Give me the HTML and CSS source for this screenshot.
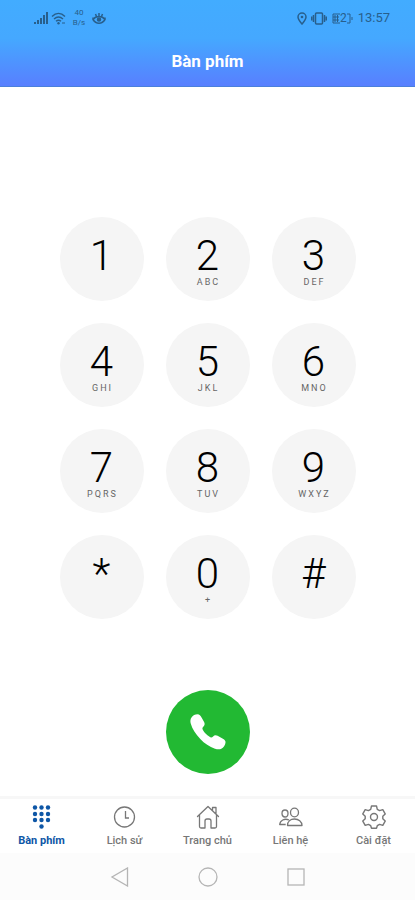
FILE: index.html
```html
<!DOCTYPE html>
<html lang="vi">
<head>
  <meta charset="UTF-8">
  <meta name="viewport" content="width=device-width, initial-scale=1.0">
  <title>Bàn phím</title>
  <link rel="stylesheet" href="styles.css">
</head>
<body>
  <header class="header">
    <div class="status-bar">
      <div class="status-group">
        <svg width="15" height="12" viewBox="0 0 15 12" fill="currentColor">
          <path d="M0 10h2v2H0zM3 8h2v4H3zM6 6h2v6H6zM9 3h2v9H9zM12 0h2v12h-2z"/>
        </svg>
        <svg width="15" height="13" viewBox="0 0 15 13" fill="none" stroke="currentColor" stroke-width="1.4">
          <path d="M1 4.500C5 .5 10 .5 14 4.500M3 7c3-2.600 6-2.600 9 0M5 9.300c1.500-1.300 3.500-1.300 5 0"/>
          <circle cx="7.500" cy="11.300" r="1.200" fill="currentColor" stroke="none"/>
          <path d="M11 11h3" stroke-width="1"/>
        </svg>
        <span class="speed"><span>40</span><span>B/s</span></span>
        <svg width="14" height="13" viewBox="0 0 14 13" fill="none" stroke="currentColor" stroke-width="1.500">
          <path d="M1 5.500v2c3 5 9 5 12 0v-2M1 7.500c3-4 9-4 12 0M7 1v3M3.500 2l1 2.500M10.500 2l-1 2.500"/>
          <circle cx="7" cy="7.500" r="1.500" fill="currentColor"/>
        </svg>
      </div>
      <div class="status-group status-right">
        <svg width="10" height="13" viewBox="0 0 10 13" fill="none" stroke="currentColor" stroke-width="1.500">
          <path d="M5 12C3 9.500 1 7.500 1 5a4 4 0 0 1 8 0c0 2.500-2 4.500-4 7z"/>
          <circle cx="5" cy="5" r="1.300" fill="currentColor" stroke="none"/>
        </svg>
        <svg width="16" height="13" viewBox="0 0 16 13" fill="none" stroke="currentColor" stroke-width="1.500">
          <rect x="4.500" y="1" width="7" height="11" rx="1"/>
          <path d="M2.500 3v7M.7 4.500v4M13.500 3v7M15.300 4.500v4"/>
        </svg>
        <span class="battery">
          <svg width="8" height="11" viewBox="0 0 8 11" fill="none" stroke="currentColor">
            <path d="M8 1H1v9h7M1 4h6M1 7h6M3 2v7M5.500 2v7"/>
          </svg>
          <span>2</span>
          <svg width="6" height="11" viewBox="0 0 6 11" fill="none" stroke="currentColor">
            <path d="M0 1h3v9H0M5 4v3"/>
          </svg>
        </span>
        <span class="clock">13:57</span>
      </div>
    </div>
    <h1 class="title">Bàn phím</h1>
  </header>

  <main class="dialer">
    <div class="keypad">
      <button class="key" type="button"><span class="digit">1</span></button>
      <button class="key" type="button"><span class="digit">2</span><span class="letters">ABC</span></button>
      <button class="key" type="button"><span class="digit">3</span><span class="letters">DEF</span></button>
      <button class="key" type="button"><span class="digit">4</span><span class="letters">GHI</span></button>
      <button class="key" type="button"><span class="digit">5</span><span class="letters">JKL</span></button>
      <button class="key" type="button"><span class="digit">6</span><span class="letters">MNO</span></button>
      <button class="key" type="button"><span class="digit">7</span><span class="letters">PQRS</span></button>
      <button class="key" type="button"><span class="digit">8</span><span class="letters">TUV</span></button>
      <button class="key" type="button"><span class="digit">9</span><span class="letters">WXYZ</span></button>
      <button class="key" type="button"><span class="digit">*</span></button>
      <button class="key" type="button"><span class="digit">0</span><span class="letters">+</span></button>
      <button class="key" type="button"><span class="digit">#</span></button>
    </div>
    <button class="call" type="button" aria-label="Gọi">
      <svg width="36" height="36" viewBox="0 0 36 36" fill="#fff">
        <path d="M1.500 3.500C3 1.500 5 .3 7.500.3c2 0 3 1.400 4.200 3.500l2.400 4.200c.9 1.800.6 3.300-.6 4.400-1.500 1.300-1.300 2.300-.3 4 1.300 2.200 3.600 4.600 6 6.200 1.600 1.100 2.600 1.300 3.900-.2 1.200-1.300 2.800-1.500 4.500-.6l5.300 3c1.800 1.100 2.900 2.200 2.600 4-.3 2.500-1.900 4.900-4.200 6-1.600.7-3.800.7-6.300-.1-5.500-1.800-10.500-5.200-14.700-9.700C5.700 20.300 2.300 15 .8 9.800.1 7.400.3 5.200 1.500 3.500z"/>
      </svg>
    </button>
  </main>

  <nav class="tabs">
    <a class="tab active" href="#">
      <svg width="24" height="24" viewBox="0 0 24 24" fill="currentColor">
        <circle cx="5" cy="2.500" r="2.200"/><circle cx="11.500" cy="2.500" r="2.200"/><circle cx="18" cy="2.500" r="2.200"/>
        <circle cx="5" cy="9" r="2.200"/><circle cx="11.500" cy="9" r="2.200"/><circle cx="18" cy="9" r="2.200"/>
        <circle cx="5" cy="15" r="2.200"/><circle cx="11.500" cy="15" r="2.200"/><circle cx="18" cy="15" r="2.200"/>
        <circle cx="11.500" cy="21.500" r="2.200"/>
      </svg>
      <span>Bàn phím</span>
    </a>
    <a class="tab" href="#">
      <svg width="24" height="24" viewBox="0 0 24 24" fill="none" stroke="currentColor" stroke-width="1.300">
        <circle cx="11.500" cy="12" r="10"/>
        <path d="M12.500 6v7H16"/>
      </svg>
      <span>Lịch sử</span>
    </a>
    <a class="tab" href="#">
      <svg width="24" height="24" viewBox="0 0 24 24" fill="none" stroke="currentColor" stroke-width="1.300" stroke-linejoin="round" stroke-linecap="round">
        <path d="M1.500 11.500L12 1.500l10.500 10M3.500 10v11.500q0 1.500 1.500 1.500h4v-7q0-2 2-2h2q2 0 2 2v7h4q1.500 0 1.500-1.500V10M16.500 5.500V2.500h3.500v6.500"/>
      </svg>
      <span>Trang chủ</span>
    </a>
    <a class="tab" href="#">
      <svg width="24" height="24" viewBox="0 0 24 24" fill="none" stroke="currentColor" stroke-width="1.300" stroke-linejoin="round">
        <ellipse cx="15.500" cy="7.500" rx="4" ry="4.300"/>
        <path d="M8.500 20.500c0-4 3-6.500 7-6.500s7.500 2.500 7.500 6.500z"/>
        <ellipse cx="6" cy="8.500" rx="3" ry="3.500"/>
        <path d="M10 15c-4.500-2-9 .5-9.300 4.500h6"/>
      </svg>
      <span>Liên hệ</span>
    </a>
    <a class="tab" href="#">
      <svg width="24" height="24" viewBox="0 0 24 24" fill="none" stroke="currentColor" stroke-width="1.400" stroke-linejoin="round">
        <path d="M9.500 1h5l.8 3.300 2.300 1.300 3.200-1 2.400 4.300-2.400 2.300v2.600l2.400 2.300-2.400 4.300-3.200-1-2.300 1.300-.8 2.600h-5l-.8-2.600-2.300-1.300-3.200 1L.8 16.100l2.400-2.300v-2.600L.8 8.900l2.400-4.300 3.200 1 2.300-1.300z"/>
        <circle cx="12" cy="12" r="3.500"/>
      </svg>
      <span>Cài đặt</span>
    </a>
  </nav>

  <div class="system-nav">
    <button type="button" aria-label="Back">
      <svg width="20" height="20" viewBox="0 0 20 20"><path d="M17.500 1v18L2 10z"/></svg>
    </button>
    <button type="button" aria-label="Home">
      <svg width="20" height="20" viewBox="0 0 20 20"><circle cx="10" cy="10" r="9"/></svg>
    </button>
    <button type="button" aria-label="Recent">
      <svg width="20" height="20" viewBox="0 0 20 20"><rect x="2" y="2" width="16" height="16"/></svg>
    </button>
  </div>
</body>
</html>
```
FILE: styles.css
```css
* {
  box-sizing: border-box;
}
body {
  margin: 0;
  min-height: 100vh;
  display: flex;
  flex-direction: column;
  font-family: Roboto, "Noto Sans", sans-serif;
  background-color: #fff;
  color: #111;
}
svg {
  display: block;
}
button {
  margin: 0;
  padding: 0;
  border: 0;
  font-family: inherit;
  color: inherit;
  cursor: pointer;
}

/* Header */
.header {
  background: linear-gradient(#42acff 0%, #45a8ff 45%, #587fff 100%);
  border-bottom: 1px solid #4a80dc;
}
.status-bar {
  display: flex;
  justify-content: space-between;
  align-items: center;
  height: 36px;
  padding: 0 25px 0 34px;
  color: #285f8c;
}
.status-group {
  display: flex;
  align-items: center;
  gap: 2px;
}
.status-right {
  gap: 4px;
}
.speed {
  display: flex;
  flex-direction: column;
  align-items: center;
  width: 22px;
  font-size: 8px;
  line-height: 10px;
}
.battery {
  display: flex;
  align-items: center;
  margin: 0 1px;
  font-size: 12px;
  line-height: 12px;
}
.clock {
  font-size: 13px;
  line-height: 16px;
}
.title {
  margin: 0;
  padding: 15px 0;
  font-size: 17px;
  line-height: 20px;
  font-weight: 700;
  text-align: center;
  color: #fff;
}

/* Dialer */
.dialer {
  flex: 1;
  display: flex;
  flex-direction: column;
  align-items: center;
  justify-content: flex-end;
  gap: 71px;
  padding: 24px 0 22px;
}
.keypad {
  display: grid;
  grid-template-columns: repeat(3, 84px);
  gap: 22px;
}
.key {
  display: flex;
  flex-direction: column;
  align-items: center;
  height: 84px;
  padding-top: 18px;
  border-radius: 50%;
  background-color: #f5f5f5;
}
.digit {
  font-size: 42px;
  line-height: 42px;
  font-weight: 350;
  color: #000;
}
.letters {
  padding-left: 2px;
  font-size: 9px;
  line-height: 10px;
  letter-spacing: 2px;
  color: #666;
}
.call {
  display: flex;
  align-items: center;
  justify-content: center;
  width: 84px;
  height: 84px;
  border-radius: 50%;
  background-color: #22b933;
}

/* Bottom tabs */
.tabs {
  display: grid;
  grid-template-columns: repeat(5, 1fr);
  border-top: 3px solid #f7f7f7;
}
.tab {
  display: flex;
  flex-direction: column;
  align-items: center;
  gap: 5px;
  padding: 6px 0 5px;
  font-size: 11px;
  line-height: 14px;
  font-weight: 500;
  text-decoration: none;
  color: #777;
}
.tab.active {
  font-weight: 700;
  color: #0d56a6;
}

.system-nav {
  display: flex;
  justify-content: center;
  align-items: center;
  gap: 68px;
  height: 47px;
  background-color: #fcfcfc;
}
.system-nav button {
  background: none;
}
.system-nav svg {
  fill: none;
  stroke: #b5b5b5;
  stroke-width: 1.3;
}
```
